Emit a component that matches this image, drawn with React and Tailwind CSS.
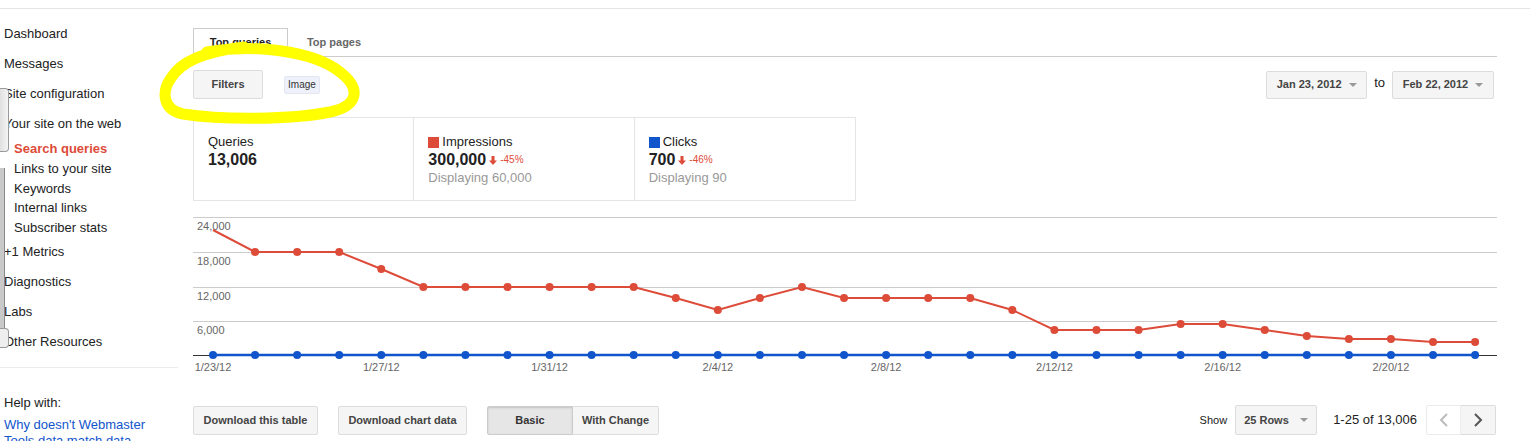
import React from 'react';

const font = "font-['Liberation_Sans',Arial,sans-serif]";

// impressions, y in page pixels
const red = [229, 251, 251, 251, 268, 286, 286, 286, 286, 286, 286, 297, 309, 297, 286, 297, 297, 297, 297, 309, 329, 329, 329, 323, 323, 329, 335, 338, 338, 341, 341];
const px = i => 20 + i * 42.07;
const xLabels = [[0, '1/23/12'], [4, '1/27/12'], [8, '1/31/12'], [12, '2/4/12'], [16, '2/8/12'], [20, '2/12/12'], [24, '2/16/12'], [28, '2/20/12']];
const yLabels = [[16, '24,000'], [51, '18,000'], [86, '12,000'], [120, '6,000']];

function Sidebar() {
    const sub = ['Links to your site', 'Keywords', 'Internal links', 'Subscriber stats'];
    return (
        <div className="w-[180px] shrink-0 pt-[10px] text-[13px] text-[#222]">
            <div className="pl-[4px] leading-[30px]">Dashboard</div>
            <div className="pl-[4px] leading-[30px]">Messages</div>
            <div className="pl-[4px] leading-[30px]">Site configuration</div>
            <div className="pl-[4px] leading-[30px]">Your site on the web</div>
            <div className="pl-[14px]">
                <div className="leading-[20px] font-bold text-[#dd4b39]">Search queries</div>
                {sub.map(s => (
                    <div key={s} className="leading-[19.5px]">{s}</div>
                ))}
            </div>
            <div className="pl-[4px] leading-[30px]">+1 Metrics</div>
            <div className="pl-[4px] leading-[30px]">Diagnostics</div>
            <div className="pl-[4px] leading-[30px]">Labs</div>
            <div className="pl-[4px] leading-[30px]">Other Resources</div>
            <div className="mt-[10px] w-[178px] border-t border-[#ebebeb]"></div>
            <div className="mt-[26px] pl-[4px] leading-[18px]">Help with:</div>
            <div className="mt-[5px] ml-[4px] w-[150px] leading-[16px] text-[#1155cc]">
                Why doesn't Webmaster Tools data match data
            </div>
        </div>
    );
}

function Btn({ children, className = '' }) {
    return (
        <div className={`flex items-center justify-center border border-[#dcdcdc] bg-[#f5f5f5] rounded-[2px] text-[11px] font-bold text-[#444] ${className}`}>
            {children}
        </div>
    );
}

function Caret() {
    return <span className="ml-[7px] inline-block w-0 h-0 border-l-[4px] border-r-[4px] border-t-[4px] border-l-transparent border-r-transparent border-t-[#999]"></span>;
}

function DownArrow() {
    return (
        <svg width="8" height="9" viewBox="0 0 8 9" className="mx-[3px] mt-[2px]">
            <rect x="2.5" y="0" width="3" height="5" fill="#dd4b39" />
            <path d="M0 4.5 L8 4.5 L4 9 Z" fill="#dd4b39" />
        </svg>
    );
}

function Stats() {
    return (
        <div className="mt-[18px] w-[663px] h-[84px] grid grid-cols-3 border border-[#e5e5e5] divide-x divide-[#e5e5e5]">
            <div className="pl-[14px] pt-[16px]">
                <div className="text-[13px] leading-[16px] text-[#222]">Queries</div>
                <div className="text-[16px] leading-[19px] font-bold text-[#222]">13,006</div>
            </div>
            <div className="pl-[14px] pt-[16px]">
                <div className="flex items-center text-[13px] leading-[16px] text-[#222]">
                    <span className="w-[11px] h-[11px] bg-[#dd4b39] mr-[3px]"></span>Impressions
                </div>
                <div className="flex items-center text-[16px] leading-[19px] font-bold text-[#222]">
                    300,000<DownArrow /><span className="text-[10px] font-normal text-[#dd4b39]">-45%</span>
                </div>
                <div className="text-[13px] leading-[17px] text-[#999]">Displaying 60,000</div>
            </div>
            <div className="pl-[14px] pt-[16px]">
                <div className="flex items-center text-[13px] leading-[16px] text-[#222]">
                    <span className="w-[11px] h-[11px] bg-[#1155cc] mr-[3px]"></span>Clicks
                </div>
                <div className="flex items-center text-[16px] leading-[19px] font-bold text-[#222]">
                    700<DownArrow /><span className="text-[10px] font-normal text-[#dd4b39]">-46%</span>
                </div>
                <div className="text-[13px] leading-[17px] text-[#999]">Displaying 90</div>
            </div>
        </div>
    );
}

function Chart() {
    const redPts = red.map((v, i) => `${px(i)},${v - 200}`).join(' ');
    return (
        <svg width="1304" height="180" viewBox="0 0 1304 180" className="block">
            {[16, 51, 86, 120].map(y => (
                <line key={y} x1="0" x2="1304" y1={y + 0.5} y2={y + 0.5} stroke="#cccccc" />
            ))}
            <line x1="0" x2="1304" y1="154.5" y2="154.5" stroke="#333" />
            {yLabels.map(([y, t]) => (
                <text key={t} x="4" y={y + 13} fontSize="11" fill="#666" fontFamily="Liberation Sans, Arial, sans-serif">{t}</text>
            ))}
            <polyline points={redPts} fill="none" stroke="#dd4b39" strokeWidth="2" />
            {red.map((v, i) => i > 0 && (
                <circle key={i} cx={px(i)} cy={v - 200} r="4" fill="#dd4b39" />
            ))}
            <line x1={px(0)} x2={px(30)} y1="154" y2="154" stroke="#1155cc" strokeWidth="2.5" />
            {red.map((_, i) => (
                <circle key={i} cx={px(i)} cy="154" r="4" fill="#1155cc" />
            ))}
            {xLabels.map(([i, t]) => (
                <text key={t} x={px(i)} y="170" fontSize="11" fill="#666" textAnchor="middle" fontFamily="Liberation Sans, Arial, sans-serif">{t}</text>
            ))}
        </svg>
    );
}

function Chevron({ dir, color }) {
    return (
        <svg width="10" height="14" viewBox="0 0 10 14">
            <path d={dir === 'left' ? 'M8 1 L2 7 L8 13' : 'M2 1 L8 7 L2 13'} fill="none" stroke={color} strokeWidth="2" />
        </svg>
    );
}

export default function App() {
    return (
        <div className={`relative w-[1530px] h-[441px] overflow-hidden bg-white ${font}`}>
            <div className="h-[9px] border-b border-[#e5e5e5]"></div>
            <div className="flex">
                <Sidebar />
                <div className="ml-[13px] w-[1304px]">
                    {/* tabs */}
                    <div className="mt-[19px] flex items-end h-[29px] border-b border-[#cccccc]">
                        <div className="w-[95px] h-[29px] -mb-px flex items-center justify-center border border-[#cccccc] border-b-white bg-white text-[11px] font-bold text-[#222]">
                            Top queries
                        </div>
                        <div className="w-[92px] h-[28px] flex items-center justify-center text-[11px] font-bold text-[#666]">
                            Top pages
                        </div>
                    </div>

                    {/* filters & dates */}
                    <div className="mt-[13px] flex items-center h-[29px]">
                        <Btn className="w-[70px] h-[29px]">Filters</Btn>
                        <div className="ml-[21px] w-[36px] h-[18px] flex items-center justify-center rounded-[2px] border border-[#e1e6f2] bg-[#eef1fa] text-[10px] text-[#333]">
                            Image
                        </div>
                        <div className="ml-auto mr-[3px] flex items-center">
                            <Btn className="w-[101px] h-[28px]">Jan 23, 2012<Caret /></Btn>
                            <span className="mx-[7px] -mt-[3px] text-[13px] text-[#222]">to</span>
                            <Btn className="w-[102px] h-[28px]">Feb 22, 2012<Caret /></Btn>
                        </div>
                    </div>

                    <Stats />
                    <Chart />

                    {/* bottom bar */}
                    <div className="mt-[24px] flex items-center h-[30px]">
                        <Btn className="w-[125px] h-[29px]">Download this table</Btn>
                        <Btn className="ml-[20px] w-[129px] h-[29px]">Download chart data</Btn>
                        <div className="ml-[20px] flex h-[29px]">
                            <div className="w-[86px] flex items-center justify-center border border-[#cccccc] bg-[#e6e6e6] shadow-[inset_0_1px_2px_rgba(0,0,0,0.15)] rounded-l-[2px] text-[11px] font-bold text-[#333]">
                                Basic
                            </div>
                            <div className="w-[86px] flex items-center justify-center border border-l-0 border-[#dcdcdc] bg-[#f5f5f5] rounded-r-[2px] text-[11px] font-bold text-[#444]">
                                With Change
                            </div>
                        </div>
                        <div className="ml-auto mr-[1px] flex items-center">
                            <span className="text-[11px] text-[#222]">Show</span>
                            <div className="ml-[8px] w-[82px] h-[30px] flex items-center justify-between px-[8px] border border-[#dcdcdc] bg-[#f5f5f5] rounded-[2px] text-[11px] font-bold text-[#444]">
                                25 Rows<Caret />
                            </div>
                            <span className="ml-[16px] text-[13px] text-[#222]">1-25 of 13,006</span>
                            <div className="ml-[9px] flex h-[30px]">
                                <div className="w-[35px] flex items-center justify-center border border-[#ebebeb] bg-white rounded-l-[2px]">
                                    <Chevron dir="left" color="#bbbbbb" />
                                </div>
                                <div className="w-[35px] flex items-center justify-center border border-l-0 border-[#dcdcdc] bg-[#f5f5f5] rounded-r-[2px]">
                                    <Chevron dir="right" color="#555555" />
                                </div>
                            </div>
                        </div>
                    </div>
                </div>
            </div>

            {/* stray window edge over the sidebar */}
            <div className="absolute left-0 top-[88px] w-[9px] h-[64px] border border-l-0 border-[#9a9a9a] rounded-r-[4px] bg-gradient-to-r from-[#e0e0e0] to-[#f4f4f4]"></div>
            <div className="absolute left-0 top-[168px] w-[5px] h-[160px] border-r border-[#8a8a8a] bg-[#c9c9c9]"></div>
            <div className="absolute left-0 top-[328px] w-[9px] h-[20px] border border-l-0 border-[#9a9a9a] rounded-r-[4px] bg-[#eeeeee]"></div>

            {/* yellow hand-drawn highlight */}
            <svg className="absolute left-0 top-0 pointer-events-none" width="1530" height="441">
                <path
                    d="M207 52 C252 44, 312 50, 340 72 C362 89, 358 106, 330 112 C290 120, 222 120, 183 114 C163 110, 161 92, 171 78 C181 62, 202 52, 244 47"
                    fill="none"
                    stroke="#ffff00"
                    strokeWidth="11"
                    strokeLinecap="round"
                />
            </svg>
        </div>
    );
}
